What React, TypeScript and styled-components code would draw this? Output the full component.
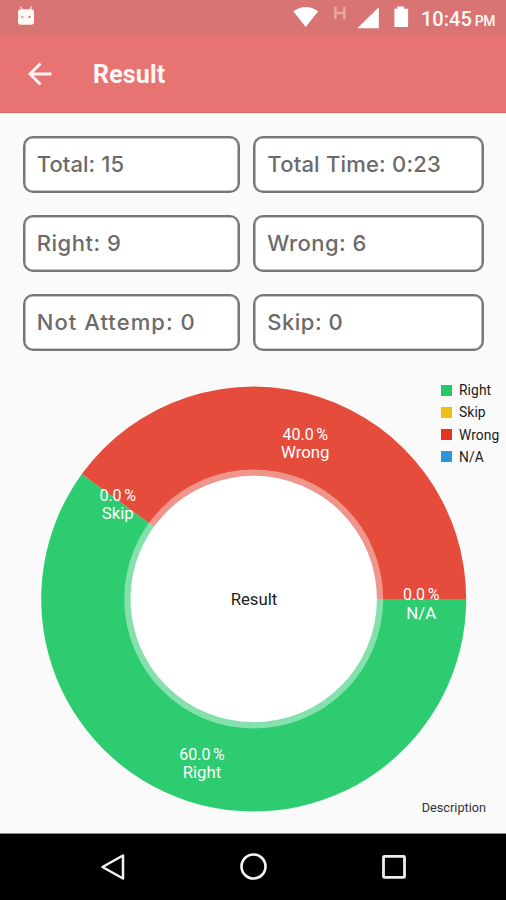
import React from "react";
import styled, { createGlobalStyle } from "styled-components";

const GlobalStyle = createGlobalStyle`
  * { box-sizing: border-box; }
  html, body { margin: 0; padding: 0; background: #fafafa; }
`;

const Screen = styled.div`
  width: 506px;
  height: 900px;
  display: flex;
  flex-direction: column;
  overflow: hidden;
  background: #fafafa;
  font-family: Roboto, sans-serif;
`;

const StatusBar = styled.header`
  height: 34px;
  flex: none;
  display: flex;
  justify-content: space-between;
  background: #d87474;
`;

const StatusIcons = styled.svg`
  display: block;
  flex: none;
`;

const StatusRight = styled.div`
  display: flex;
`;

const Clock = styled.div`
  width: 85px;
  padding-top: 7px;
  color: #fff8f5;
  font-size: 20px;
  line-height: 24px;
  font-weight: 500;
  white-space: nowrap;
`;

const Meridiem = styled.span`
  margin-left: 3px;
  font-size: 14px;
  letter-spacing: -0.4px;
`;

const AppBar = styled.div`
  height: 79px;
  flex: none;
  display: flex;
  align-items: center;
  padding: 1px 0 0 28px;
  background: #e87373;
  border-bottom: 1px solid #e06163;
`;

const Title = styled.h1`
  margin: 3px 0 0 41px;
  color: #fff7f5;
  font-size: 25px;
  line-height: 30px;
  font-weight: 700;
  letter-spacing: 0.15px;
`;

const Stats = styled.section`
  flex: none;
  display: grid;
  grid-template-columns: 217px 231px;
  grid-template-rows: repeat(3, 57px);
  column-gap: 13.5px;
  row-gap: 22.3px;
  padding: 22.5px 0 0 22.8px;
`;

const Stat = styled.div<{ $spacing: number }>`
  display: flex;
  align-items: center;
  padding: 0 0 1px 12px;
  border: 2px solid #777;
  border-radius: 10px;
  box-shadow: inset 0 0 0 0.6px #8a8a8a;
  background: #fff;
  color: #6b6b6b;
  font-family: Inter, sans-serif;
  font-size: 22px;
  font-weight: 500;
  letter-spacing: ${(p) => p.$spacing}px;
  white-space: nowrap;
`;

const ChartArea = styled.section`
  flex: 1;
  min-height: 0;
  display: flex;
  position: relative;
`;

const Chart = styled.svg`
  display: block;
  flex: none;
`;

const SliceName = styled.text`
  fill: #fff;
  font-family: Roboto, sans-serif;
  font-size: 16.8px;
  text-anchor: middle;
`;

const SliceValue = styled(SliceName)`
  font-size: 16px;
  word-spacing: -1.3px;
`;

const CenterText = styled(SliceName)`
  fill: #222;
`;

const Legend = styled.ul`
  position: absolute;
  top: 28px;
  left: 441px;
  margin: 0;
  padding: 0;
  list-style: none;
`;

const LegendItem = styled.li`
  height: 22.2px;
  display: flex;
  align-items: center;
  gap: 7px;
  color: #1b1b1b;
  font-size: 13.8px;
  letter-spacing: 0.1px;
`;

const Swatch = styled.span<{ $color: string }>`
  width: 11px;
  height: 11px;
  background: ${(p) => p.$color};
`;

const Description = styled.div`
  position: absolute;
  right: 20px;
  bottom: 17px;
  color: #333;
  font-size: 12.7px;
  line-height: 16px;
`;

const NavBar = styled.nav`
  height: 67px;
  flex: none;
  background: #000;
  border-top: 1px solid #8b8b8b;
  display: flex;
  align-items: center;
  justify-content: center;
  gap: 112px;
`;

const stats = [
  { text: "Total: 15", spacing: 0.05 },
  { text: "Total Time: 0:23", spacing: 0.2 },
  { text: "Right: 9", spacing: 0.5 },
  { text: "Wrong: 6", spacing: 0.45 },
  { text: "Not Attemp: 0", spacing: 1.05 },
  { text: "Skip: 0", spacing: 0.5 },
];

const legend = [
  { label: "Right", color: "#24ca68" },
  { label: "Skip", color: "#eec011" },
  { label: "Wrong", color: "#e43522" },
  { label: "N/A", color: "#2e94d9" },
];

const sliceLabels = [
  { value: "40.0 %", label: "Wrong", x: 305.3, y: 440 },
  { value: "0.0 %", label: "Skip", x: 117.7, y: 501 },
  { value: "0.0 %", label: "N/A", x: 421.2, y: 600.3 },
  { value: "60.0 %", label: "Right", x: 202, y: 760 },
];

export default function App() {
  return (
    <Screen>
      <GlobalStyle />
      <StatusBar>
        <StatusIcons width="50" height="34">
          <path d="M20.500 6.500l2 4M31.500 6.500l-2 4" stroke="#f7d5cf" strokeWidth="1.600" />
          <rect x="18" y="9.300" width="16" height="15.500" rx="2.800" fill="#fff8f5" />
          <circle cx="22.300" cy="17" r="1" fill="#d88080" />
          <circle cx="29.500" cy="17" r="1" fill="#c95d60" />
        </StatusIcons>
        <StatusRight>
          <StatusIcons width="128" height="34" viewBox="293 0 128 34">
            <path d="M293.300 11.300Q305.700 2.700 318.200 11.300L305.700 27Z" fill="#fff" />
            <path d="M335.300 6.800v12.500M344.300 6.800v12.500M335.200 13h9.100" fill="none" stroke="#eaa7a3" strokeWidth="2.400" />
            <path d="M378.800 7.200V28.200H357.300Z" fill="#fff" />
            <path d="M394.400 8.700h2.700V6.500h7v2.200h4v18.200h-13.700Z" fill="#fff" />
          </StatusIcons>
          <Clock>
            10:45<Meridiem>PM</Meridiem>
          </Clock>
        </StatusRight>
      </StatusBar>
      <AppBar>
        <StatusIcons width="24" height="24">
          <path d="M23.500 12H2M12.500 1.500L2 12l10.500 10.500" fill="none" stroke="#fff4f1" strokeWidth="2.900" />
        </StatusIcons>
        <Title>Result</Title>
      </AppBar>
      <Stats>
        {stats.map((s) => (
          <Stat key={s.text} $spacing={s.spacing}>
            {s.text}
          </Stat>
        ))}
      </Stats>
      <ChartArea>
        <Chart width="506" height="464" viewBox="0 351 506 464">
          <path d="M253.700 599L81.800 474.100A212.500 212.500 0 1 0 466.200 599Z" fill="#2ecc71" />
          <path d="M253.700 599L81.800 474.100A212.500 212.500 0 0 1 466.200 599Z" fill="#e64c3c" />
          <circle cx="253.700" cy="599" r="129.500" fill="#fff" fillOpacity="0.410" />
          <circle cx="253.700" cy="599" r="123.200" fill="#fff" />
          {sliceLabels.map((s) => (
            <React.Fragment key={s.label}>
              <SliceValue x={s.x} y={s.y}>{s.value}</SliceValue>
              <SliceName x={s.x} y={s.y + 18.3}>{s.label}</SliceName>
            </React.Fragment>
          ))}
          <CenterText x="254" y="605">Result</CenterText>
        </Chart>
        <Legend>
          {legend.map((l) => (
            <LegendItem key={l.label}>
              <Swatch $color={l.color} />
              {l.label}
            </LegendItem>
          ))}
        </Legend>
        <Description>Description</Description>
      </ChartArea>
      <NavBar>
        <StatusIcons width="28" height="28">
          <path d="M24 2.500V25.500L3.500 14Z" fill="none" stroke="#f4f4f4" strokeWidth="2.500" strokeLinejoin="round" />
        </StatusIcons>
        <StatusIcons width="28" height="28">
          <circle cx="14.500" cy="13.500" r="12" fill="none" stroke="#f4f4f4" strokeWidth="2.600" />
        </StatusIcons>
        <StatusIcons width="28" height="28">
          <rect x="4.500" y="3.300" width="21" height="21" rx="0.800" fill="none" stroke="#eee" strokeWidth="2.800" />
        </StatusIcons>
      </NavBar>
    </Screen>
  );
}
